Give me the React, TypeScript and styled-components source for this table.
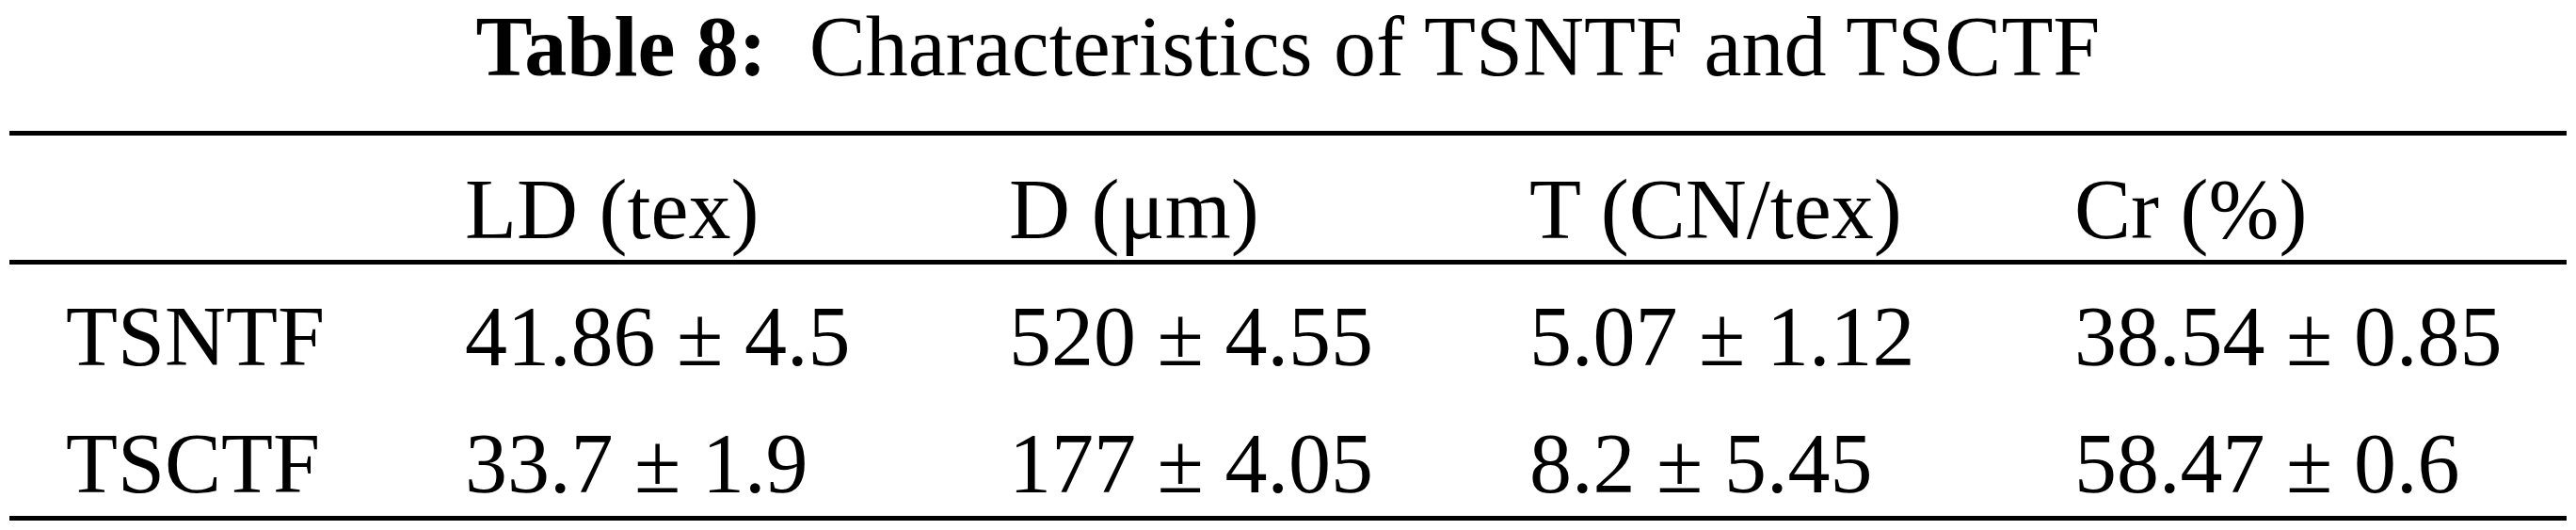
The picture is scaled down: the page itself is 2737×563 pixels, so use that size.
import styled, { createGlobalStyle } from "styled-components";

const GlobalStyle = createGlobalStyle`
  html, body {
    margin: 0;
    padding: 0;
    background: #fff;
  }
  body {
    font-family: "Liberation Serif", "Times New Roman", serif;
    color: #000;
  }
`;

const Figure = styled.div`
  width: 2717px;
  margin: 0 10px;
`;

const Caption = styled.div`
  font-size: 90px;
  line-height: 85px;
  text-align: center;
  white-space: nowrap;
  padding-top: 7px;
  margin-bottom: 47px;
`;

const Label = styled.span`
  font-weight: bold;
`;

const Head = styled.div`
  border-top: 5px solid #000;
  border-bottom: 5px solid #000;
  padding: 34px 0 8px;
`;

const Body = styled.div`
  display: flex;
  flex-direction: column;
  gap: 45px;
  padding: 32px 0 10px;
  border-bottom: 5px solid #000;
`;

const Row = styled.div`
  display: grid;
  grid-template-columns: 484px 578px 553px 579px 1fr;
  font-size: 90px;
  line-height: 90px;
  white-space: nowrap;
`;

const Cell = styled.div<{ $stub?: boolean }>`
  padding-left: ${(props) => (props.$stub ? "60px" : "0")};
`;

const columns = ["LD (tex)", "D (\u03bcm)", "T (CN/tex)", "Cr (%)"];

const rows = [
  {
    name: "TSNTF",
    values: ["41.86 \u00b1 4.5", "520 \u00b1 4.55", "5.07 \u00b1 1.12", "38.54 \u00b1 0.85"],
  },
  {
    name: "TSCTF",
    values: ["33.7 \u00b1 1.9", "177 \u00b1 4.05", "8.2 \u00b1 5.45", "58.47 \u00b1 0.6"],
  },
];

export default function App() {
  return (
    <>
      <GlobalStyle />
      <Figure>
        <Caption>
          <Label>Table 8:</Label>
          {"\u2002"}Characteristics of TSNTF and TSCTF
        </Caption>
        <Head>
          <Row>
            <Cell $stub />
            {columns.map((col) => (
              <Cell key={col}>{col}</Cell>
            ))}
          </Row>
        </Head>
        <Body>
          {rows.map((row) => (
            <Row key={row.name}>
              <Cell $stub>{row.name}</Cell>
              {row.values.map((value, i) => (
                <Cell key={i}>{value}</Cell>
              ))}
            </Row>
          ))}
        </Body>
      </Figure>
    </>
  );
}
